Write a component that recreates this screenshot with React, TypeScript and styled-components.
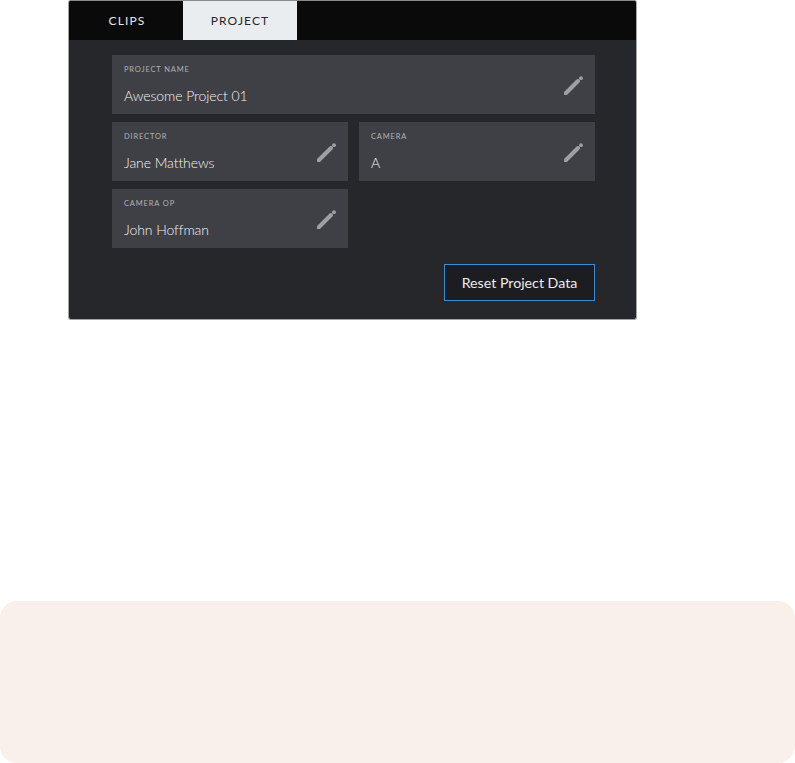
import React from 'react';
import styled, { createGlobalStyle } from 'styled-components';

const GlobalStyle = createGlobalStyle`
  html, body {
    margin: 0;
    padding: 0;
    background: #ffffff;
    font-family: Lato, 'Liberation Sans', sans-serif;
  }
`;

function PencilIcon() {
  return (
    <PencilSvg viewBox="0 0 20 20" aria-hidden="true">
      <path d="M3 17 L15 5" stroke="#a0a0a4" strokeWidth="4" strokeLinecap="round" fill="none" />
      <path d="M1.2 16.4 L1 19 L3.6 18.8 Z" fill="#a0a0a4" />
      <circle cx="18" cy="2.2" r="1.9" fill="#a0a0a4" />
    </PencilSvg>
  );
}

function Field({ label, value, wide }: { label: string; value: string; wide?: boolean }) {
  return (
    <FieldBox $wide={wide}>
      <div>
        <FieldLabel>{label}</FieldLabel>
        <FieldValue>{value}</FieldValue>
      </div>
      <PencilIcon />
    </FieldBox>
  );
}

export default function App() {
  return (
    <Page>
      <GlobalStyle />
      <Panel>
        <TabBar>
          <Tab>CLIPS</Tab>
          <Tab $active>PROJECT</Tab>
        </TabBar>
        <Body>
          <FieldGrid>
            <Field label="PROJECT NAME" value="Awesome Project 01" wide />
            <Field label="DIRECTOR" value="Jane Matthews" />
            <Field label="CAMERA" value="A" />
            <Field label="CAMERA OP" value="John Hoffman" />
          </FieldGrid>
          <Actions>
            <ResetButton>Reset Project Data</ResetButton>
          </Actions>
        </Body>
      </Panel>
      <Callout />
    </Page>
  );
}

const Page = styled.div`
  width: 795px;
  height: 763px;
  overflow: hidden;
  display: flex;
  flex-direction: column;
`;

const Panel = styled.div`
  box-sizing: border-box;
  width: 569px;
  height: 320px;
  margin-left: 68px;
  border: 1px solid #a3a3a3;
  border-top-color: #8a8a8a;
  border-radius: 3px;
  background: #26272b;
  overflow: hidden;
`;

const TabBar = styled.div`
  display: flex;
  height: 39px;
  padding-left: 4px;
  background: #0a0a0a;
`;

const Tab = styled.div<{ $active?: boolean }>`
  width: ${(p) => (p.$active ? '114px' : '110px')};
  padding-right: ${(p) => (p.$active ? '0' : '2px')};
  box-sizing: border-box;
  display: flex;
  align-items: center;
  justify-content: center;
  font-size: 12px;
  letter-spacing: 1.1px;
  color: ${(p) => (p.$active ? '#26272b' : '#e6e6e6')};
  background: ${(p) => (p.$active ? '#eaedf0' : 'transparent')};
`;

const Body = styled.div`
  padding: 15px 41px 0 43px;
`;

const FieldGrid = styled.div`
  display: grid;
  grid-template-columns: 236px 236px;
  column-gap: 11px;
  row-gap: 8px;
`;

const FieldBox = styled.div<{ $wide?: boolean }>`
  ${(p) => (p.$wide ? 'grid-column: 1 / span 2;' : '')}
  box-sizing: border-box;
  height: 59px;
  padding: 10px 12px 0 12px;
  display: flex;
  justify-content: space-between;
  background: #3f4045;
`;

const FieldLabel = styled.div`
  font-size: 7.5px;
  line-height: 10px;
  letter-spacing: 0.85px;
  color: #b0b1b4;
`;

const FieldValue = styled.div`
  margin-top: 11px;
  font-size: 14px;
  line-height: 20px;
  font-weight: 300;
  letter-spacing: -0.08px;
  color: #f4f4f4;
`;

const PencilSvg = styled.svg`
  width: 20px;
  height: 20px;
  margin-top: 11px;
  flex: none;
`;

const Actions = styled.div`
  display: flex;
  justify-content: flex-end;
  margin-top: 16px;
`;

const ResetButton = styled.div`
  box-sizing: border-box;
  width: 151px;
  height: 37px;
  display: flex;
  align-items: center;
  justify-content: center;
  border: 1px solid #3d8bd0;
  background: #1c1d20;
  font-size: 14.2px;
  color: #ececec;
`;

const Callout = styled.div`
  height: 162px;
  margin-top: 281px;
  border-radius: 17px;
  background: #faf0eb;
`;
